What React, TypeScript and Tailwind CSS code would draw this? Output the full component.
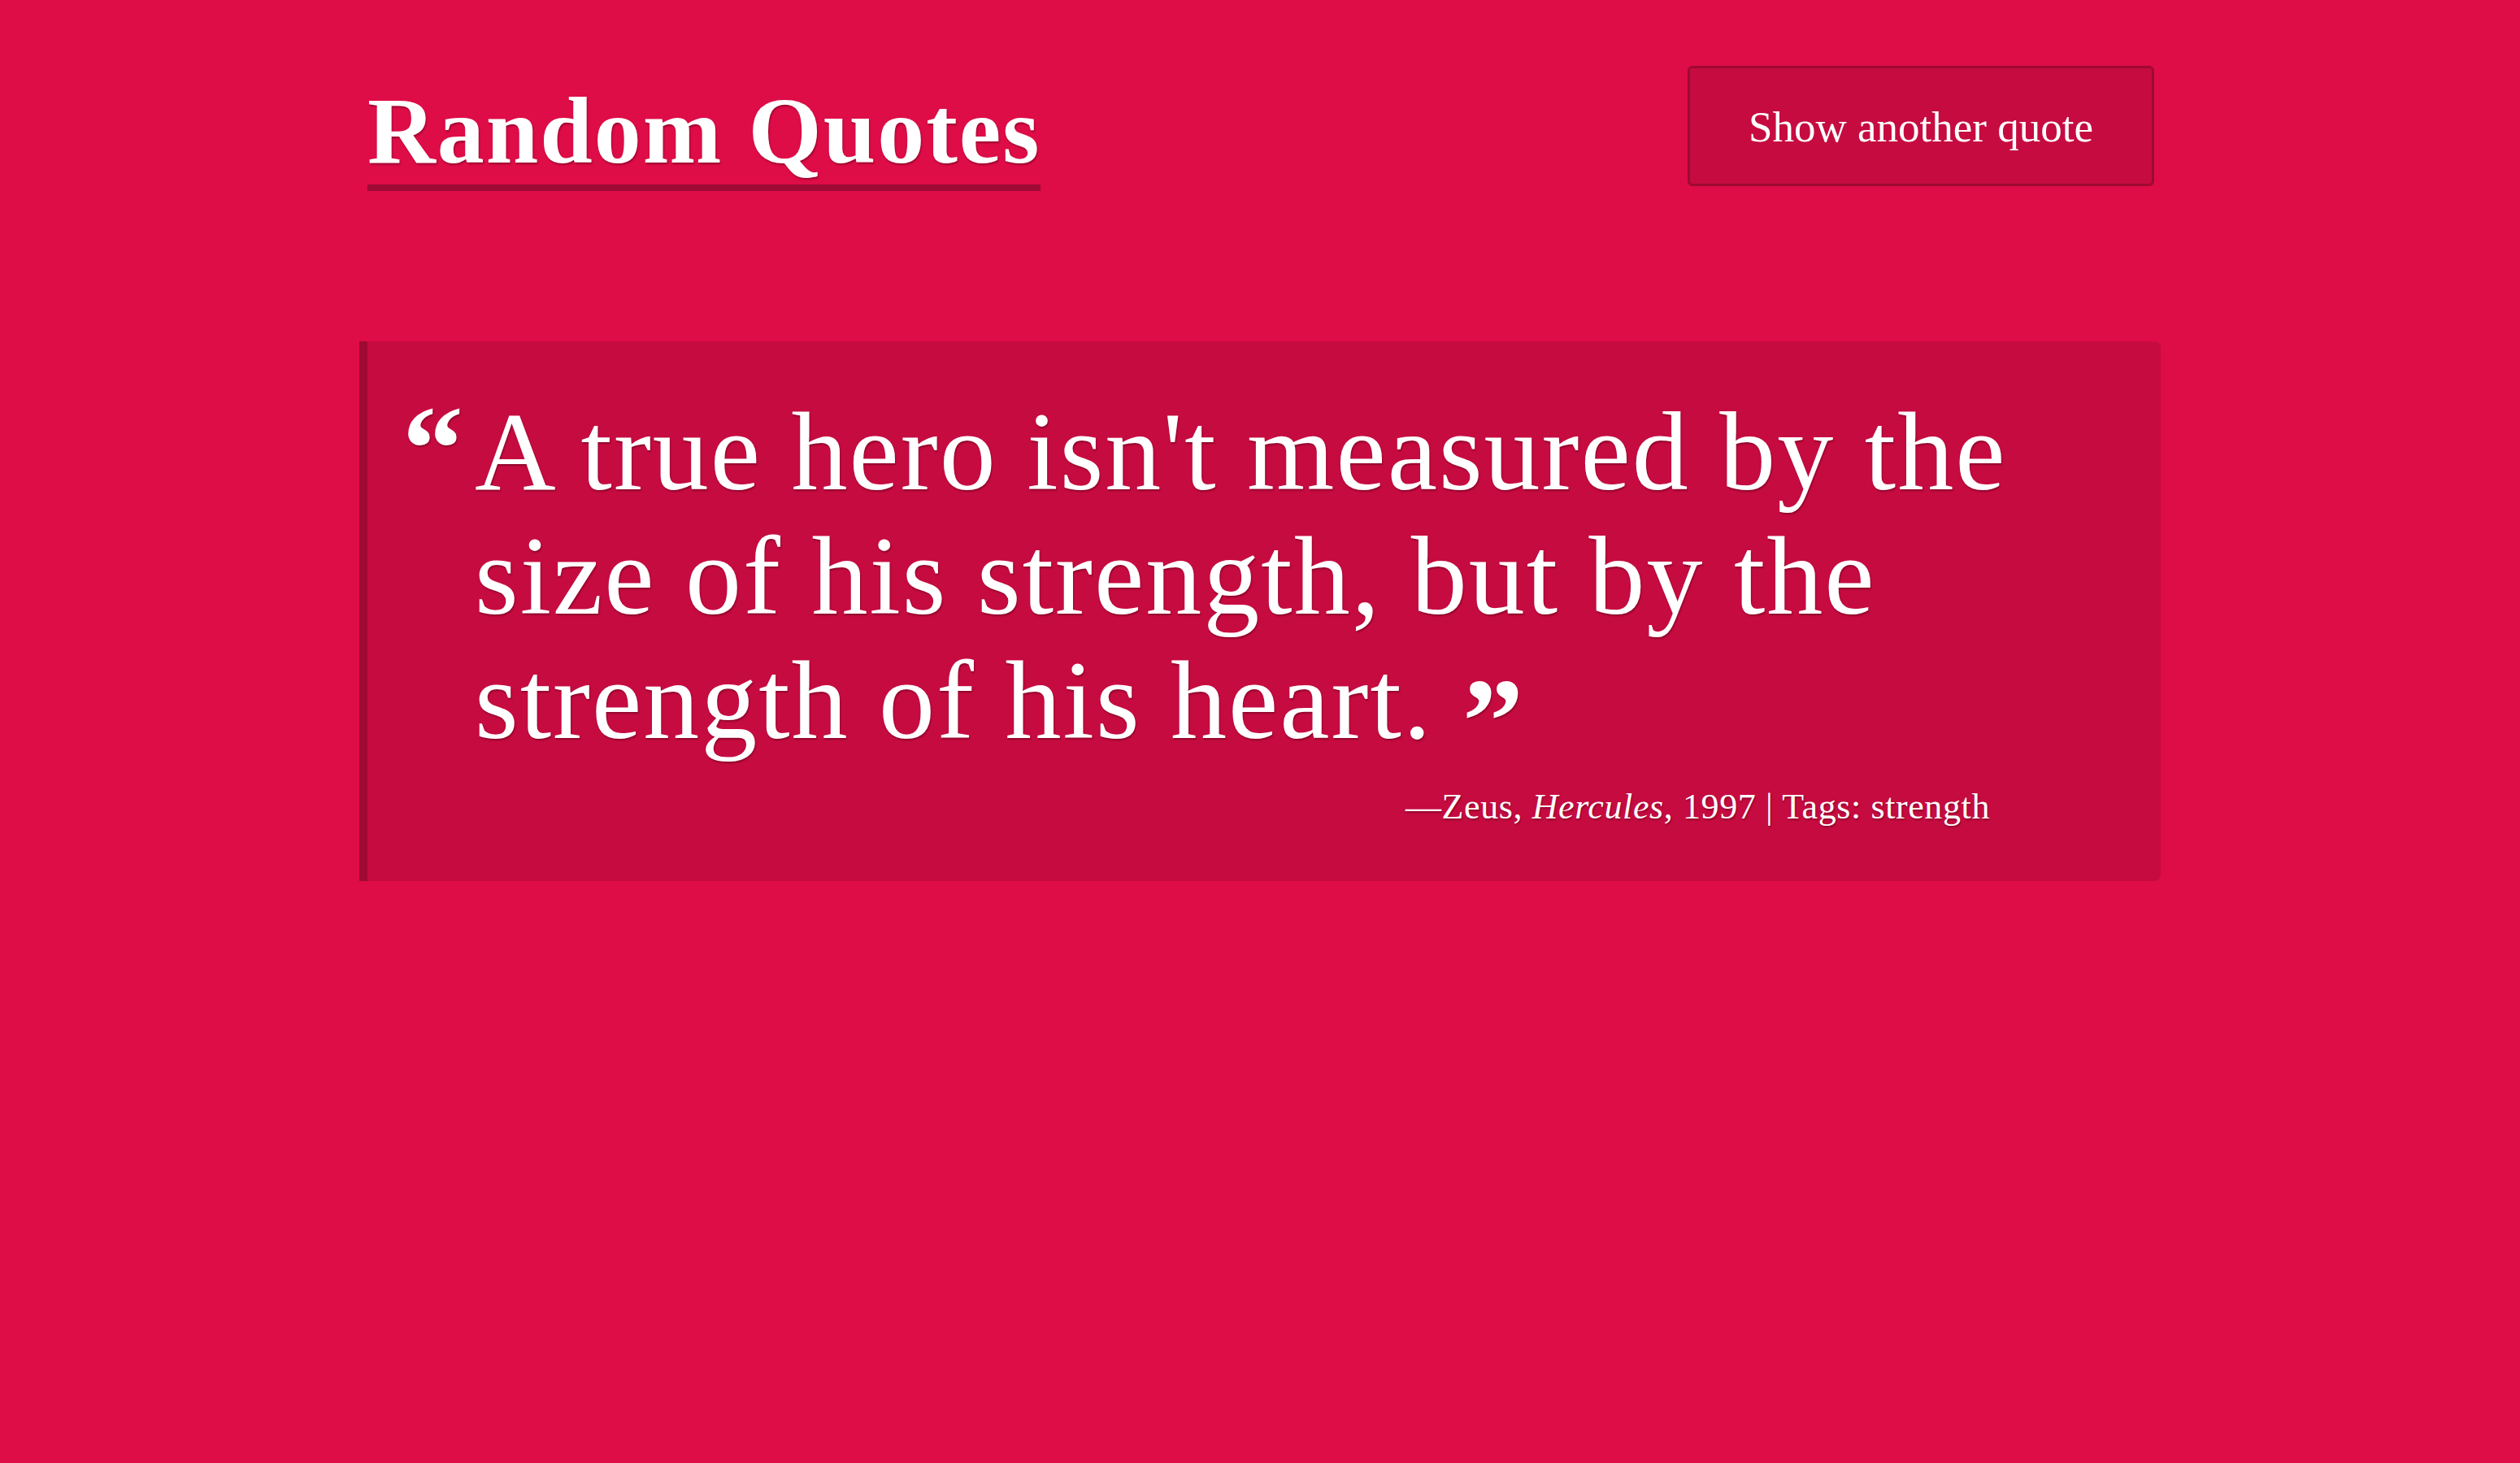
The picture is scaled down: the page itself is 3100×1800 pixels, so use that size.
import React from "react";

const serif = "font-['Liberation_Serif',_'Times_New_Roman',_serif]";
const shadow = "[text-shadow:1px_2px_2px_rgba(80,0,20,0.45)]";

const App = () => {
  return (
    <div className={`min-h-screen bg-[#de0c47] text-white ${serif} ${shadow}`}>
      <div className="mx-auto w-[2216px]">
        <header className="flex items-start justify-between pl-[10px] pr-[8px] pt-[81px]">
          <h1 className="mt-[22px] border-b-[8px] border-[#9e0a33] pb-[8px] text-[116px] font-bold leading-none tracking-[2px]">
            Random Quotes
          </h1>
          <button className="flex h-[148px] w-[574px] items-center justify-center rounded-md border-[3px] border-[#9e0a33] bg-[#c60b40] pt-[4px] text-[53px] text-white">
            Show another quote
          </button>
        </header>

        <figure className="mt-[185px] rounded-r-lg border-l-[10px] border-[#9e0a33] bg-[#c60b40] pb-[59px] pl-[43px] pr-[150px] pt-[59px]">
          <div className="flex">
            <span className="w-[89px] shrink-0 pt-[17px] text-[150px] font-bold leading-[0.75]">
              “
            </span>
            <p className="text-[138px] leading-[153px] tracking-[2px]">
              A true hero isn't measured by the
              <br />
              size of his strength, but by the
              <br />
              strength of his heart.{" "}
              <span className="align-[-30px] text-[150px] font-bold leading-[0]">”</span>
            </p>
          </div>
          <figcaption className="mr-[60px] mt-[23px] text-right text-[44px] leading-[1.45] tracking-[0.6px]">
            —Zeus, <cite className="italic">Hercules</cite>, 1997 | Tags: strength
          </figcaption>
        </figure>
      </div>
    </div>
  );
};

export default App;
